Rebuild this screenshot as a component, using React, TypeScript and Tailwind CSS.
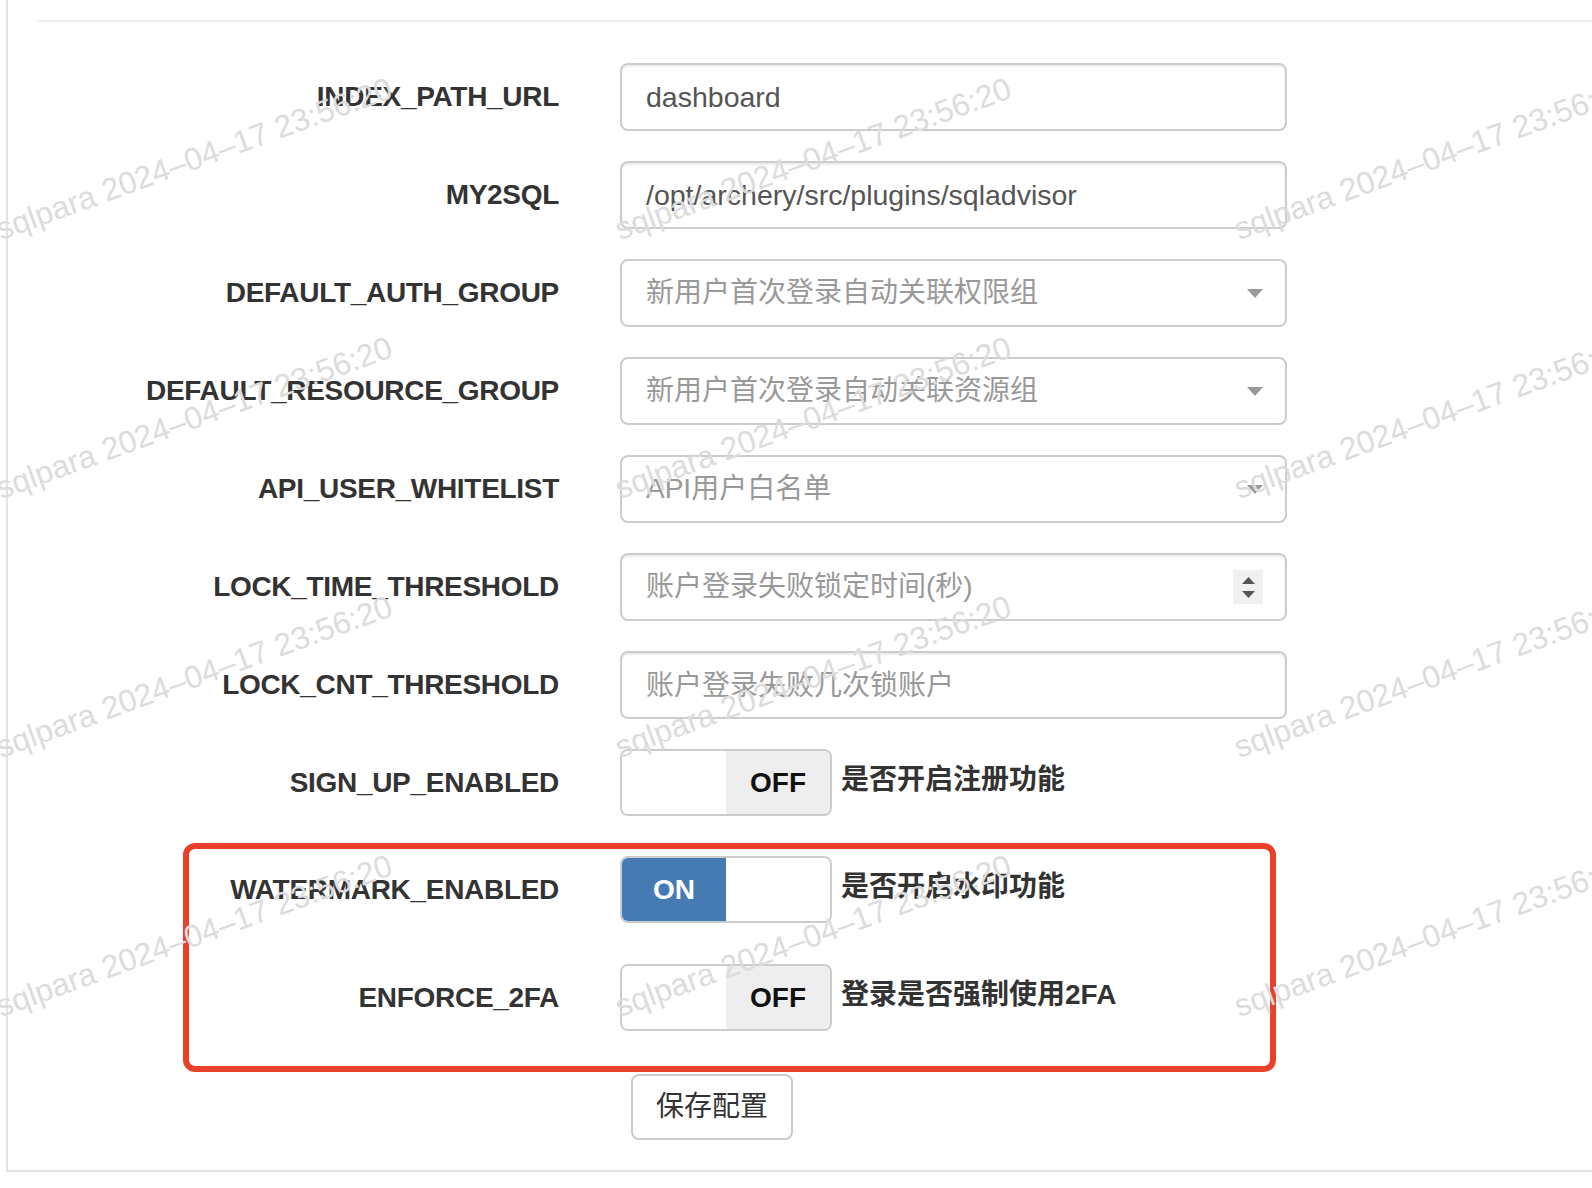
import React from "react";

const WATERMARK = "sqlpara 2024–04–17 23:56:20";

function Row({ label, children, last }: { label: string; children: React.ReactNode; last?: boolean }) {
  return (
    <div className={`flex items-center ${last ? "" : "mb-[30px]"}`}>
      <label className="w-[551px] text-right text-[28px] font-bold tracking-[-0.3px] text-[#333]">{label}</label>
      <div className="ml-[61px] flex items-center">{children}</div>
    </div>
  );
}

function TextInput({ value, placeholder }: { value?: string; placeholder?: string }) {
  return (
    <input
      readOnly
      defaultValue={value}
      placeholder={placeholder}
      className="h-[68px] w-[667px] rounded-[8px] border-2 border-[#ccc] px-[24px] text-[28.5px] text-[#555] shadow-[inset_0_2px_2px_rgba(0,0,0,0.075)] outline-none placeholder:text-[28px] placeholder:text-[#999]"
    />
  );
}

function Select({ placeholder }: { placeholder: string }) {
  return (
    <div className="flex h-[68px] w-[667px] items-center justify-between rounded-[8px] border-2 border-[#ccc] pl-[24px] pr-[22px] text-[28px] text-[#999]">
      <span>{placeholder}</span>
      <svg width="16" height="9" viewBox="0 0 16 9">
        <path d="M0 0h16L8 9z" fill="#999" />
      </svg>
    </div>
  );
}

function NumberInput({ placeholder }: { placeholder: string }) {
  return (
    <div className="flex h-[68px] w-[667px] items-center justify-between rounded-[8px] border-2 border-[#ccc] pl-[24px] pr-[22px] text-[28px] text-[#999] shadow-[inset_0_2px_2px_rgba(0,0,0,0.075)]">
      <span>{placeholder}</span>
      <div className="flex h-[34px] w-[30px] flex-col items-center justify-center gap-[7px] bg-[#f0f0f0]">
        <svg width="13" height="7" viewBox="0 0 13 7">
          <path d="M0 7h13L6.5 0z" fill="#555" />
        </svg>
        <svg width="13" height="7" viewBox="0 0 13 7">
          <path d="M0 0h13L6.5 7z" fill="#555" />
        </svg>
      </div>
    </div>
  );
}

function Switch({ on, desc }: { on: boolean; desc: string }) {
  return (
    <>
      <div className="flex h-[67px] w-[212px] overflow-hidden rounded-[8px] border-2 border-[#ccc] text-[28px] font-bold">
        {on ? (
          <>
            <div className="flex w-[104px] items-center justify-center bg-[#457ab3] text-white">ON</div>
            <div className="w-[104px] bg-white" />
          </>
        ) : (
          <>
            <div className="w-[104px] bg-white" />
            <div className="flex w-[104px] items-center justify-center bg-[#eeeeee] text-[#111]">OFF</div>
          </>
        )}
      </div>
      <span className="mb-[6px] ml-[9px] text-[28px] font-bold text-[#333]">{desc}</span>
    </>
  );
}

export default function App() {
  return (
    <div className="relative h-[1188px] w-full overflow-hidden bg-white font-['Liberation_Sans','Noto_Sans_CJK_SC',sans-serif]">
      <div className="ml-[6px] h-[1172px] border-b-2 border-l-2 border-[#e3e3e3] pt-[20px]">
        <div className="ml-[29px] border-t-2 border-[#eeeeee]" />
        <form className="mt-[41px]">
          <Row label="INDEX_PATH_URL">
            <TextInput value="dashboard" />
          </Row>
          <Row label="MY2SQL">
            <TextInput value="/opt/archery/src/plugins/sqladvisor" />
          </Row>
          <Row label="DEFAULT_AUTH_GROUP">
            <Select placeholder="新用户首次登录自动关联权限组" />
          </Row>
          <Row label="DEFAULT_RESOURCE_GROUP">
            <Select placeholder="新用户首次登录自动关联资源组" />
          </Row>
          <Row label="API_USER_WHITELIST">
            <Select placeholder="API用户白名单" />
          </Row>
          <Row label="LOCK_TIME_THRESHOLD">
            <NumberInput placeholder="账户登录失败锁定时间(秒)" />
          </Row>
          <Row label="LOCK_CNT_THRESHOLD">
            <TextInput placeholder="账户登录失败几次锁账户" />
          </Row>
          <Row label="SIGN_UP_ENABLED">
            <Switch on={false} desc="是否开启注册功能" />
          </Row>

          <div className="relative pb-[43px] pt-[10px]">
            <div className="pointer-events-none absolute left-[175px] top-[-3px] h-[229px] w-[1093px] rounded-[12px] border-[6px] border-[#e94129]" />
            <div className="mb-[41px]">
              <Row label="WATERMARK_ENABLED" last>
                <Switch on={true} desc="是否开启水印功能" />
              </Row>
            </div>
            <Row label="ENFORCE_2FA" last>
              <Switch on={false} desc="登录是否强制使用2FA" />
            </Row>
          </div>

          <button
            type="button"
            className="ml-[623px] h-[66px] w-[162px] rounded-[8px] border-2 border-[#ccc] bg-white text-[28px] text-[#333]"
          >
            保存配置
          </button>
        </form>
      </div>

      {/* watermark overlay */}
      <div className="pointer-events-none absolute left-[3px] top-[-14px] grid auto-rows-[259px] grid-cols-[repeat(3,619px)]">
        {Array.from({ length: 12 }).map((_, i) => (
          <div key={i} className="relative">
            <span className="absolute bottom-0 left-0 origin-bottom-left -rotate-[20deg] whitespace-nowrap text-[31.5px] leading-none text-[#dcdcdc]">
              {WATERMARK}
            </span>
          </div>
        ))}
      </div>
    </div>
  );
}
